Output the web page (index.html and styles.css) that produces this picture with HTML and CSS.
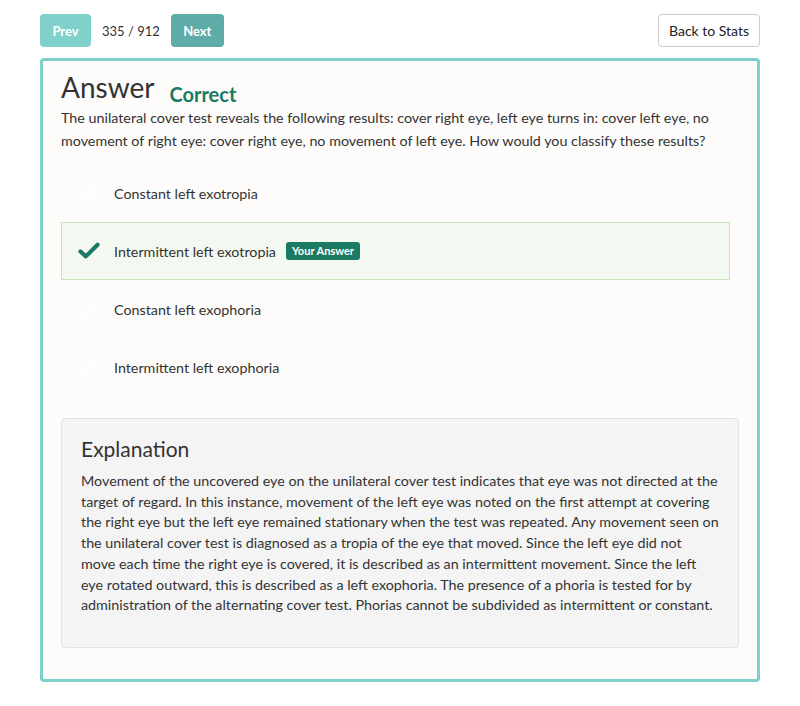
FILE: index.html
```html
<!DOCTYPE html>
<html>
<head>
<meta charset="utf-8">
<link rel="stylesheet" href="styles.css">
</head>
<body>
<div class="topbar">
  <button class="btn btn-prev">Prev</button>
  <span class="count">335 / 912</span>
  <button class="btn btn-next">Next</button>
  <button class="btn-back">Back to Stats</button>
</div>
<div class="card">
  <div class="title-row">
    <h1 class="title">Answer</h1>
    <span class="status">Correct</span>
  </div>
  <p class="question">The unilateral cover test reveals the following results: cover right eye, left eye turns in: cover left eye, no movement of right eye: cover right eye, no movement of left eye. How would you classify these results?</p>
  <ul class="options">
    <li class="option">
      <svg class="check check-hidden" viewBox="0 0 24 20" width="22" height="18"><path d="M2.5 10.5 L8.5 16 L21.5 3" fill="none" stroke="currentColor" stroke-width="4.6" stroke-linecap="round" stroke-linejoin="round"/></svg>
      <span class="opt-text">Constant left exotropia</span>
    </li>
    <li class="option option-selected">
      <svg class="check" viewBox="0 0 24 20" width="22" height="18"><path d="M2.5 10.5 L8.5 16 L21.5 3" fill="none" stroke="currentColor" stroke-width="4.6" stroke-linecap="round" stroke-linejoin="round"/></svg>
      <span class="opt-text">Intermittent left exotropia</span>
      <span class="badge">Your Answer</span>
    </li>
    <li class="option">
      <svg class="check check-hidden" viewBox="0 0 24 20" width="22" height="18"><path d="M2.5 10.5 L8.5 16 L21.5 3" fill="none" stroke="currentColor" stroke-width="4.6" stroke-linecap="round" stroke-linejoin="round"/></svg>
      <span class="opt-text">Constant left exophoria</span>
    </li>
    <li class="option">
      <svg class="check check-hidden" viewBox="0 0 24 20" width="22" height="18"><path d="M2.5 10.5 L8.5 16 L21.5 3" fill="none" stroke="currentColor" stroke-width="4.6" stroke-linecap="round" stroke-linejoin="round"/></svg>
      <span class="opt-text">Intermittent left exophoria</span>
    </li>
  </ul>
  <div class="explanation">
    <h2 class="exp-title">Explanation</h2>
    <p class="exp-text">Movement of the uncovered eye on the unilateral cover test indicates that eye was not directed at the target of regard. In this instance, movement of the left eye was noted on the first attempt at covering the right eye but the left eye remained stationary when the test was repeated. Any movement seen on the unilateral cover test is diagnosed as a tropia of the eye that moved. Since the left eye did not move each time the right eye is covered, it is described as an intermittent movement. Since the left eye rotated outward, this is described as a left exophoria. The presence of a phoria is tested for by administration of the alternating cover test. Phorias cannot be subdivided as intermittent or constant.</p>
  </div>
</div>
</body>
</html>
```

FILE: styles.css
```css
* { box-sizing: border-box; }
body {
  margin: 0;
  background: #ffffff;
  font-family: Lato, "Open Sans", sans-serif;
  color: #333333;
}
.topbar {
  display: flex;
  align-items: center;
  padding: 14px 40px 0 40px;
  height: 47px;
}
.btn {
  height: 33px;
  border: none;
  border-radius: 4px;
  color: #ffffff;
  font-family: Lato, sans-serif;
  font-weight: 700;
  font-size: 13px;
  padding: 0;
}
.btn-prev {
  width: 51px;
  background: #80d0cc;
}
.btn-next {
  width: 53px;
  background: #5eaca8;
}
.count {
  font-size: 13px;
  margin: 0 11px;
  color: #333;
}
.btn-back {
  margin-left: auto;
  height: 33px;
  width: 102px;
  background: #ffffff;
  border: 1px solid #cccccc;
  border-radius: 4px;
  font-family: Lato, sans-serif;
  font-size: 14px;
  color: #222;
  padding: 0;
}
.card {
  margin: 11px 40px 0 40px;
  border: 3px solid #7fcfcb;
  border-radius: 4px;
  background: #fdfcfa;
  padding: 8px 18px 31px 18px;
}
.title-row {
  display: flex;
  align-items: baseline;
}
.title {
  margin: 0;
  font-size: 28px;
  font-weight: 400;
  line-height: 37px;
  color: #333;
}
.status {
  margin-left: 15px;
  font-size: 20px;
  font-weight: 700;
  color: #1a7a63;
  position: relative;
  top: 4px;
}
.question {
  margin: 0;
  font-size: 14.3px;
  line-height: 23px;
  color: #333;
}
.options {
  list-style: none;
  margin: 12px 9px 0 0;
  padding: 0;
}
.option {
  height: 58px;
  display: flex;
  align-items: center;
  padding-left: 16px;
  font-size: 14.3px;
  border: 1px solid transparent;
}
.option-selected {
  background: #f3f9f1;
  border-color: #c6e5bd;
}
.check {
  color: #1a7a63;
  flex: none;
  margin-right: 14px;
}
.check-hidden {
  color: #fefefe;
}
.opt-text {
  color: #333;
}
.badge {
  margin-left: 10px;
  background: #1a7a63;
  color: #ffffff;
  font-size: 11px;
  font-weight: 700;
  height: 18px;
  line-height: 18px;
  padding: 0 6px;
  border-radius: 3px;
}
.explanation {
  margin-top: 22px;
  background: #f4f4f4;
  border: 1px solid #e2e2e2;
  border-radius: 4px;
  padding: 16px 19px 31px 19px;
}
.exp-title {
  margin: 0 0 8px 0;
  font-size: 21px;
  font-weight: 400;
  line-height: 28px;
  color: #333;
}
.exp-text {
  margin: 0;
  font-size: 14.3px;
  line-height: 20.7px;
  color: #333;
}
```
